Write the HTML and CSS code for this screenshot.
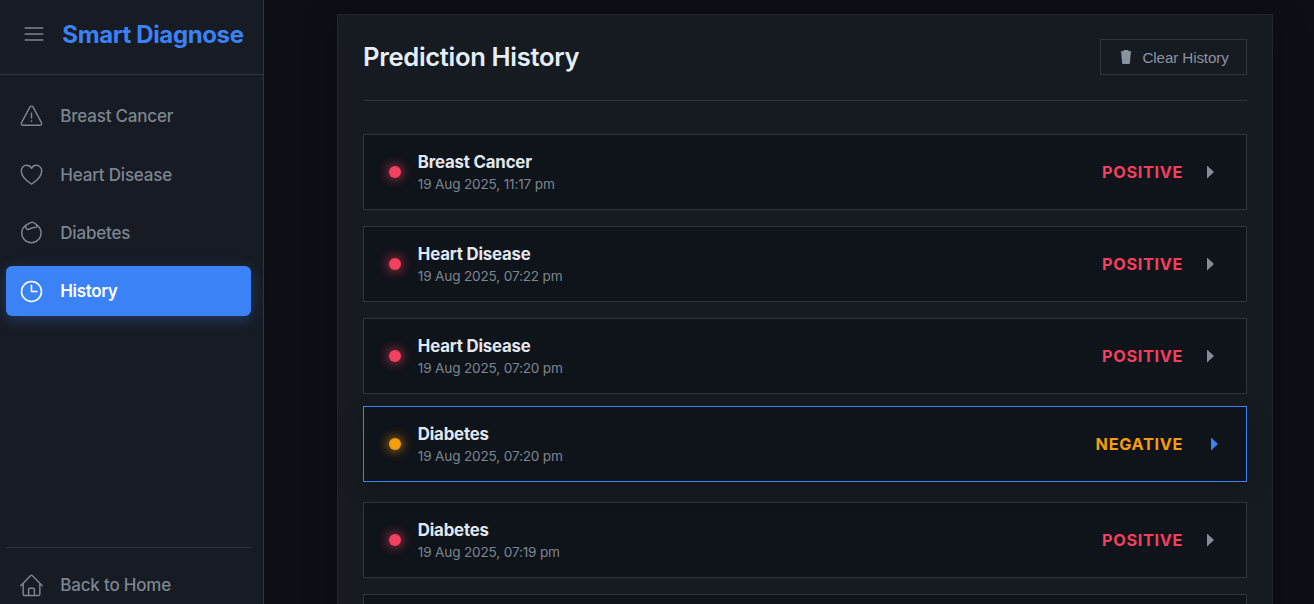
FILE: index.html
```html
<!DOCTYPE html>
<html lang="en">
<head>
<meta charset="utf-8">
<title>Smart Diagnose</title>
<link rel="stylesheet" href="styles.css">
</head>
<body>
<div class="app">
  <aside class="sidebar">
    <header class="brand">
      <svg class="menu-icon" width="20" height="16" viewBox="0 0 20 16"><path d="M1.2 2h17.6M1.2 8h17.6M1.2 14h17.6"/></svg>
      <span class="brand-name">Smart Diagnose</span>
    </header>
    <nav class="nav">
      <a class="nav-item"><svg class="icon" viewBox="0 0 24 24"><path d="M10.3 2.2 1.6 18.300a1.900 1.900 0 0 0 1.700 2.900h17.400a1.900 1.900 0 0 0 1.700-2.900L13.700 2.200a1.950 1.950 0 0 0-3.400 0zM12 8.500v5"/><circle class="fill" cx="12" cy="16.800" r="1"/></svg><span>Breast Cancer</span></a>
      <a class="nav-item"><svg class="icon" viewBox="0 0 24 24"><path d="M12 22C8 19.500 1.400 14.800 1.400 8.300A5.600 5.600 0 0 1 7 2.400c2.200 0 4 1.200 5 3.200 1-2 2.800-3.200 5-3.200a5.600 5.600 0 0 1 5.600 5.900C22.600 14.800 16 19.500 12 22z"/></svg><span>Heart Disease</span></a>
      <a class="nav-item"><svg class="icon" viewBox="0 0 24 24"><path d="M5.800 4.500A10.100 10.100 0 1 0 18 4.500C16.300 3.200 14.700 1.600 13 1.200 11 1.200 9.200 3.400 5.800 4.500zM5.900 5c0 2.500 1.300 4.500 3.200 3.700 2.300-1 3.600-1.900 6-1.900 1.800.1 2.900-1 2.300-2.300"/></svg><span>Diabetes</span></a>
      <a class="nav-item active"><svg class="icon" viewBox="0 0 24 24"><circle cx="12" cy="12" r="10.400"/><path d="M12 5.500V12h5.700"/></svg><span>History</span></a>
    </nav>
    <footer class="nav-footer">
      <a class="nav-item"><svg class="icon" viewBox="0 0 24 24"><path d="M.8 12.200 11.200 1.600a1.100 1.100 0 0 1 1.600 0L23.200 12.200M3.300 10.200v11c0 .7.500 1.200 1.200 1.200h15c.7 0 1.200-.5 1.200-1.200v-11M9 22.200v-6.300c0-.6.500-1.100 1.100-1.100h3.800c.6 0 1.100.5 1.100 1.100v6.300"/></svg><span>Back to Home</span></a>
    </footer>
  </aside>
  <main class="main">
    <section class="card">
      <header class="card-header">
        <h1>Prediction History</h1>
        <button class="clear"><svg width="12" height="14" viewBox="0 0 12 14"><path d="M3.500 1.300V.5A.5.5 0 0 1 4 0h4a.5.5 0 0 1 .5.5v.8h2.600v1.500H.9V1.300zM1.200 2.600h9.600l-.9 10.300a1.100 1.100 0 0 1-1.100 1H3.200a1.100 1.100 0 0 1-1.100-1z"/></svg><span>Clear History</span></button>
      </header>
      <div class="list">
        <article class="entry"><i class="dot"></i><div class="info"><h2>Breast Cancer</h2><p>19 Aug 2025, 11:17 pm</p></div><b class="result">POSITIVE</b><i class="caret"></i></article>
        <article class="entry"><i class="dot"></i><div class="info"><h2>Heart Disease</h2><p>19 Aug 2025, 07:22 pm</p></div><b class="result">POSITIVE</b><i class="caret"></i></article>
        <article class="entry"><i class="dot"></i><div class="info"><h2>Heart Disease</h2><p>19 Aug 2025, 07:20 pm</p></div><b class="result">POSITIVE</b><i class="caret"></i></article>
        <article class="entry negative selected"><i class="dot"></i><div class="info"><h2>Diabetes</h2><p>19 Aug 2025, 07:20 pm</p></div><b class="result">NEGATIVE</b><i class="caret"></i></article>
        <article class="entry"><i class="dot"></i><div class="info"><h2>Diabetes</h2><p>19 Aug 2025, 07:19 pm</p></div><b class="result">POSITIVE</b><i class="caret"></i></article>
        <article class="entry"></article>
      </div>
    </section>
  </main>
</div>
</body>
</html>
```
FILE: styles.css
```css
* { box-sizing: border-box; }
body { margin: 0; font-family: Inter, sans-serif; background: #0c0f16; color: #e2e8f0; }
.app { display: flex; height: 604px; overflow: hidden; }
.sidebar { width: 264px; flex: none; height: 604px; display: flex; flex-direction: column; background: #171b23; border-right: 1px solid #30343c; }
.brand { height: 75px; flex: none; display: flex; align-items: center; gap: 18px; padding: 0 0 6px 24.300px; border-bottom: 1px solid #30343c; }
.menu-icon { fill: none; stroke: #7d8590; stroke-width: 1.500; stroke-linecap: round; margin-top: -1px; }
.brand-name { font-size: 24px; font-weight: 700; letter-spacing: -.38px; color: #3b82f6; line-height: 29px; }
.nav { display: flex; flex-direction: column; gap: 8.400px; padding: 16px 12px 0 6px; }
.nav-item { height: 50px; flex: none; display: flex; align-items: center; gap: 17.300px; padding-left: 14px; border-radius: 6px; font-size: 17px; font-weight: 500; letter-spacing: -.2px; color: #7d8590; white-space: nowrap; }
.nav-item:nth-child(2) span { padding-top: 1px; }
.icon { width: 23px; height: 23px; flex: none; fill: none; stroke: currentColor; stroke-width: 1.500; stroke-linecap: round; stroke-linejoin: round; }
.icon .fill { fill: currentColor; stroke: none; }
.active { background: #3b82f6; color: #fff; font-weight: 600; letter-spacing: -.35px; box-shadow: 0 4px 15px rgba(59, 130, 246, .3); }
.active .icon { stroke-width: 1.700; }
.nav-footer { margin: auto 12px 0 6px; height: 57px; flex: none; border-top: 1px solid #30343c; padding-top: 12px; }
.main { flex: 1; min-width: 0; padding: 14px 41px 0 73px; }
.card { height: 700px; background: #161b22; border: 1px solid #21262e; padding: 24px 25px; box-shadow: 0 8px 32px rgba(0, 0, 0, .3); }
.card-header { display: flex; justify-content: space-between; align-items: flex-start; height: 62px; border-bottom: 1px solid #30343c; }
h1 { margin: 2px 0 0; font-size: 25.600px; line-height: 31px; font-weight: 600; letter-spacing: -.33px; color: #e8eef7; }
.clear { width: 147px; height: 36px; display: flex; align-items: center; gap: 10.500px; padding: 0 0 0 19px; border: 1px solid #30343c; background: transparent; color: #8b929f; font: 15.200px "Liberation Sans", Arial, sans-serif; letter-spacing: -.12px; white-space: nowrap; }
.clear svg { fill: #8b929f; flex: none; }
.list { display: flex; flex-direction: column; gap: 16px; padding-top: 33px; }
.entry { height: 76px; flex: none; display: flex; align-items: center; padding: 0 32px 0 25px; background: #0f131a; border: 1px solid #30343c; }
.dot { width: 12px; height: 12px; border-radius: 50%; background: #f43f5e; box-shadow: 0 0 12px #f43f5e; margin-right: 16.800px; }
.info { flex: 1; }
h2 { margin: 1px 0 0; font-size: 16.800px; line-height: 22px; font-weight: 650; letter-spacing: -.17px; }
p { margin: 1px 0 0; font-size: 13.600px; line-height: 20px; letter-spacing: -.17px; color: #7d8590; }
.result { font-size: 16.300px; font-weight: 700; letter-spacing: .65px; color: #f43f5e; margin-right: 24px; }
.caret { width: 7px; height: 13px; background: #858c98; clip-path: polygon(0 0, 100% 50%, 0 100%); }
.negative .dot { background: #f59e0b; box-shadow: 0 0 12px #f59e0b; }
.negative .result { color: #f59e0b; }
.selected { transform: translateY(-4px); border-color: #3b82f6; box-shadow: 0 8px 24px rgba(0, 0, 0, .2); }
.selected .caret { background: #3b82f6; transform: translateX(4px); }
```
